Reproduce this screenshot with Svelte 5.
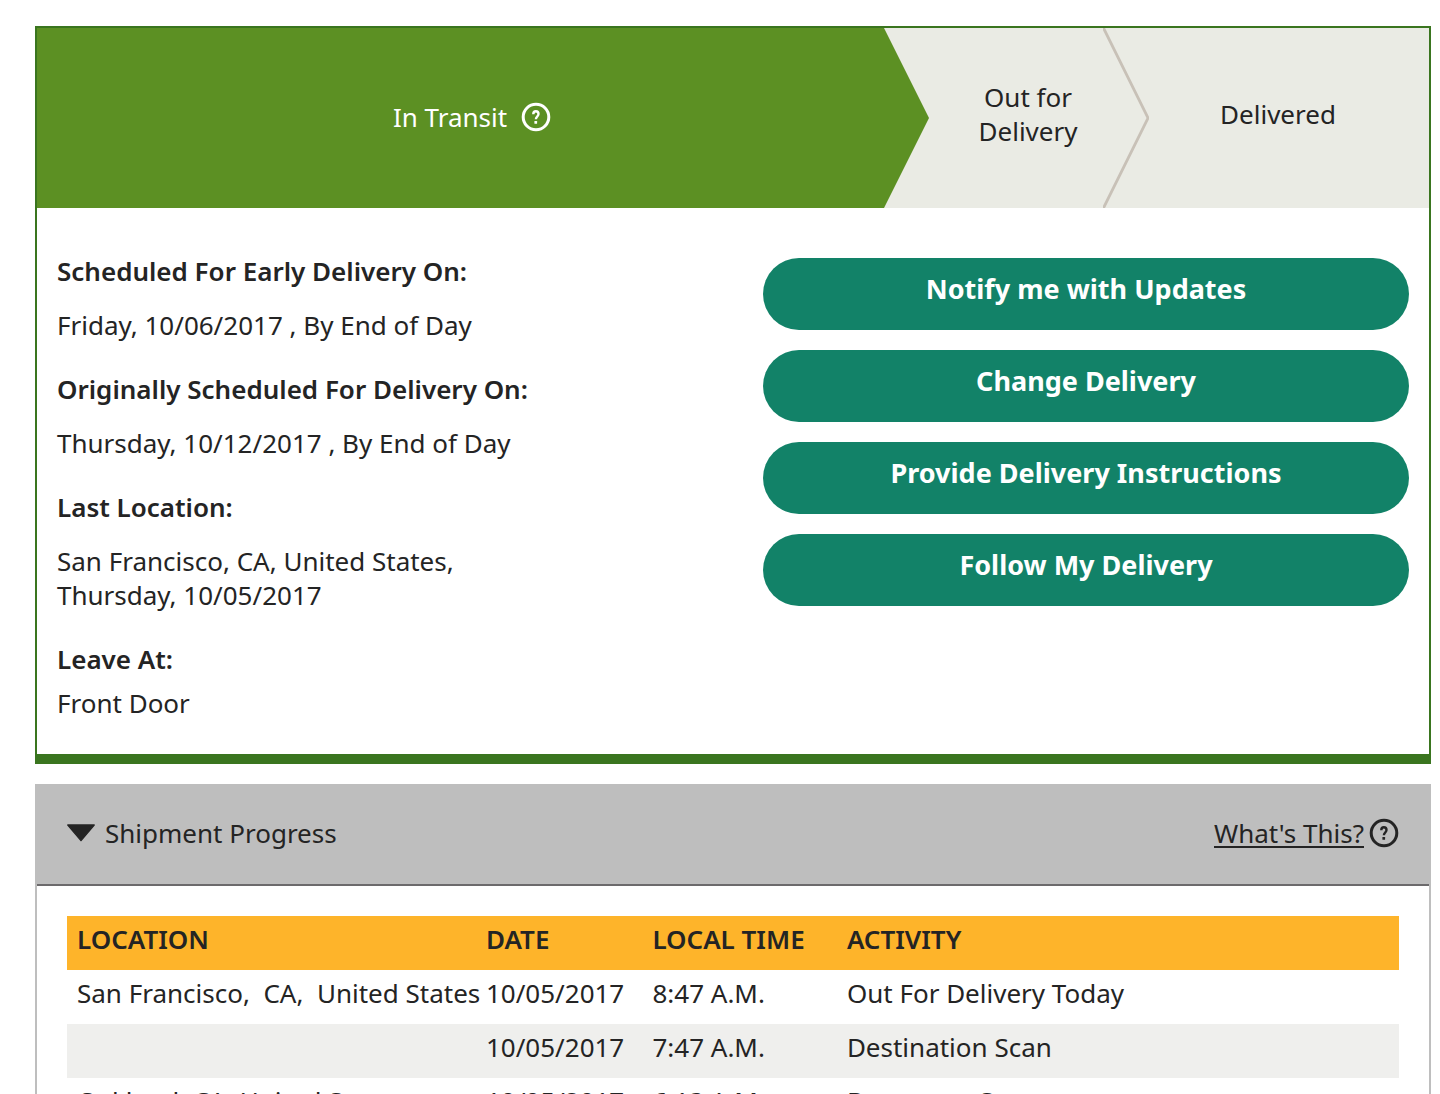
<script>
  const details = [
    { label: 'Scheduled For Early Delivery On:', lines: ['Friday, 10/06/2017 , By End of Day'] },
    { label: 'Originally Scheduled For Delivery On:', lines: ['Thursday, 10/12/2017 , By End of Day'] },
    { label: 'Last Location:', lines: ['San Francisco, CA, United States,', 'Thursday, 10/05/2017'] },
    { label: 'Leave At:', lines: ['Front Door'], tight: true }
  ];
  const actions = [
    'Notify me with Updates',
    'Change Delivery',
    'Provide Delivery Instructions',
    'Follow My Delivery'
  ];
  const rows = [
    { location: 'San Francisco,\u00a0 CA,\u00a0 United States', date: '10/05/2017', time: '8:47 A.M.', activity: 'Out For Delivery Today' },
    { location: '', date: '10/05/2017', time: '7:47 A.M.', activity: 'Destination Scan' },
    { location: 'Oakland,\u00a0CA,\u00a0United States', date: '10/05/2017', time: '6:13 A.M.', activity: 'Departure Scan' }
  ];
  let open = $state(true);
</script>

{#snippet help()}
  <svg class="help" viewBox="0 0 30 30" aria-hidden="true">
    <circle cx="15" cy="15" r="12.8" fill="none" stroke="currentColor" stroke-width="3" />
    <path d="M12.3 12.2c0-2 1-3 2.6-3s2.6 1 2.6 2.7c0 2.3-2.6 2.8-2.6 5.4" fill="none" stroke="currentColor" stroke-width="2.4" />
    <rect x="13.4" y="19" width="2.7" height="2.8" rx=".5" fill="currentColor" />
  </svg>
{/snippet}

<main>
  <section class="status" aria-label="Delivery status">
    <ol class="steps">
      <li class="current">
        <span class="label">In Transit
          <button class="icon" aria-label="Help with In Transit">{@render help()}</button>
        </span>
        <svg class="arrow" viewBox="0 0 46 180" preserveAspectRatio="none" aria-hidden="true">
          <rect width="46" height="180" fill="#eaebe4" />
          <path d="M0 0h1l45 90L1 180H0z" fill="#5c9023" />
        </svg>
      </li>
      <li>
        <span class="label">Out for<br />Delivery</span>
        <svg class="arrow" viewBox="0 0 46 180" preserveAspectRatio="none" aria-hidden="true">
          <path d="M0 -1l45 91L0 181" fill="none" stroke="#c8c1b7" stroke-width="2.8" />
        </svg>
      </li>
      <li class="last"><span class="label">Delivered</span></li>
    </ol>

    <div class="body">
      <dl>
        {#each details as item}
          <div class="detail" class:tight={item.tight}>
            <dt>{item.label}</dt>
            <dd>{#each item.lines as line}<span>{line}</span>{/each}</dd>
          </div>
        {/each}
      </dl>
      <div class="actions">
        {#each actions as action}
          <button>{action}</button>
        {/each}
      </div>
    </div>
  </section>

  <section class="progress">
    <header>
      <button class="toggle" aria-expanded={open} onclick={() => (open = !open)}>
        <svg class="caret" viewBox="0 0 28 18" aria-hidden="true">
          <path d="M.8 1h26.4L14 16.6z" fill="currentColor" stroke="currentColor" stroke-width="1.4" stroke-linejoin="round" />
        </svg>
        Shipment Progress
      </button>
      <a href="#whats-this"><span>What's This?</span>{@render help()}</a>
    </header>
    {#if open}
      <div class="history">
        <table>
          <colgroup><col class="c1" /><col class="c2" /><col class="c3" /><col class="c4" /></colgroup>
          <thead>
            <tr><th scope="col">LOCATION</th><th scope="col">DATE</th><th scope="col">LOCAL TIME</th><th scope="col">ACTIVITY</th></tr>
          </thead>
          <tbody>
            {#each rows as row}
              <tr><td>{row.location}</td><td>{row.date}</td><td>{row.time}</td><td>{row.activity}</td></tr>
            {/each}
          </tbody>
        </table>
      </div>
    {/if}
  </section>
</main>

<style>
  :global(body) {
    margin: 0;
    background: #fff;
  }
  main {
    padding: 26px 9px 0 35px;
    font: 26px/34px 'Noto Sans', 'Open Sans', sans-serif;
    color: #242424;
  }
  button {
    margin: 0;
    padding: 0;
    border: 0;
    background: none;
    color: inherit;
    font: inherit;
    cursor: pointer;
  }
  .status {
    border: 2px solid #3a751f;
    border-bottom-width: 10px;
  }
  .steps {
    display: grid;
    grid-template-columns: 892fr 220fr 280fr;
    min-height: 180px;
    margin: 0;
    padding: 0;
    list-style: none;
    background: #eaebe4;
  }
  li {
    display: flex;
    align-items: stretch;
  }
  .label {
    flex: 1;
    display: flex;
    align-items: center;
    justify-content: center;
    gap: 14px;
    padding: 0 0 8px 24px;
    text-align: center;
  }
  .current .label {
    background: #5c9023;
    color: #fff;
    padding-bottom: 3px;
  }
  .last .label {
    padding: 0 22px 8px 0;
  }
  .arrow {
    width: 46px;
    height: 180px;
  }
  .help {
    display: block;
    width: 30px;
    height: 30px;
  }
  .body {
    display: grid;
    grid-template-columns: 1fr 1fr;
    gap: 60px;
    padding: 46px 20px 34px;
  }
  dl {
    display: grid;
    gap: 30px;
    margin: 0;
  }
  .detail {
    display: grid;
    gap: 20px;
  }
  .tight {
    gap: 10px;
  }
  dt {
    font-weight: 600;
  }
  dd {
    margin: 0;
  }
  dd span {
    display: block;
  }
  .actions {
    display: flex;
    flex-direction: column;
    gap: 20px;
    padding-top: 4px;
  }
  .actions button {
    padding: 14px 20px 24px;
    border-radius: 36px;
    background: #128268;
    color: #fff;
    font-size: 27px;
    font-weight: 700;
  }
  .progress {
    margin-top: 20px;
    border: 2px solid #bebebe;
  }
  header {
    display: flex;
    justify-content: space-between;
    align-items: center;
    padding: 30px 30px 34px;
    border-bottom: 2px solid #6c6a6c;
    background: #bebebe;
  }
  .toggle {
    display: flex;
    align-items: center;
    gap: 10px;
  }
  .caret {
    width: 28px;
    height: 18px;
  }
  header a {
    display: flex;
    align-items: center;
    gap: 5px;
    color: inherit;
    text-decoration: none;
  }
  header a span {
    text-decoration: underline;
    text-decoration-thickness: 2px;
    text-underline-offset: 3px;
  }
  .history {
    padding: 30px 30px 0;
  }
  table {
    width: 100%;
    table-layout: fixed;
    border-collapse: collapse;
    white-space: nowrap;
  }
  .c1 { width: 30.7%; }
  .c2 { width: 12.5%; }
  .c3 { width: 14.6%; }
  .c4 { width: 42.2%; }
  th,
  td {
    height: 34px;
    padding: 6px 10px 14px;
    text-align: left;
  }
  th {
    background: #feb42a;
    font-weight: 600;
  }
  tbody tr:nth-child(even) {
    background: #efefed;
  }
</style>
